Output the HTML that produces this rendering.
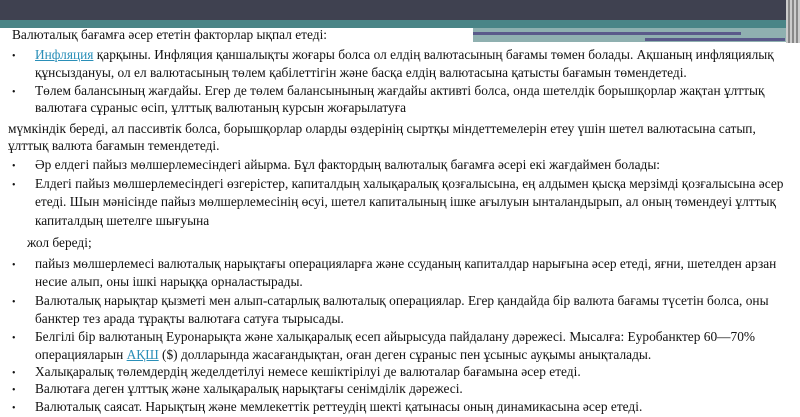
<!DOCTYPE html>
<html><head><meta charset="utf-8"><style>
body{margin:0;width:800px;height:413px;overflow:hidden;background:#fff;position:relative;font-family:"Liberation Serif","DejaVu Serif",serif;color:#111;}
.l{position:absolute;white-space:nowrap;font-size:14px;line-height:16px;transform:scaleX(0.955);transform-origin:0 0;margin-top:2px;}
.b{position:absolute;left:12px;font-size:10px;line-height:16px;margin-top:2px;}
a{color:#2a8fb8;text-decoration:underline;}
</style></head><body>
<div style="position:absolute;left:0;top:0;width:800px;height:20px;background:#3f4150"></div>
<div style="position:absolute;left:0;top:20px;width:800px;height:8px;background:#4a8587"></div>
<div style="position:absolute;left:473px;top:28px;width:315px;height:14px;background:#8fb0b0"></div>
<div style="position:absolute;left:473px;top:32px;width:268px;height:3px;background:#5a5a8a"></div>
<div style="position:absolute;left:645px;top:38px;width:140px;height:3px;background:#5a5a8a"></div>
<div style="position:absolute;left:786px;top:0;width:14px;height:43px;background:repeating-linear-gradient(90deg,#ccc 0 2px,#888 2px 4px)"></div>

<div class="l" style="left:12px;top:26px">Валюталық бағамға әсер ететін факторлар ықпал етеді:</div>
<div class="b" style="top:47px">•</div>
<div class="l" style="left:35px;top:46px"><a>Инфляция</a> қарқыны. Инфляция қаншалықты жоғары болса ол елдің валютасының бағамы төмен болады. Ақшаның инфляциялық</div>
<div class="l" style="left:35px;top:64px">құнсыздануы, ол ел валютасының төлем қабілеттігін және басқа елдің валютасына қатысты бағамын төмендетеді.</div>
<div class="b" style="top:83px">•</div>
<div class="l" style="left:35px;top:82px">Төлем балансының жағдайы. Егер де төлем балансынының жағдайы активті болса, онда шетелдік борышқорлар жақтан ұлттық</div>
<div class="l" style="left:35px;top:99px">валютаға сұраныс өсіп, ұлттық валютаның курсын жоғарылатуға</div>
<div class="l" style="left:8px;top:120px">мүмкіндік береді, ал пассивтік болса, борышқорлар оларды өздерінің сыртқы міндеттемелерін етеу үшін шетел валютасына сатып,</div>
<div class="l" style="left:8px;top:137px">ұлттық валюта бағамын темендетеді.</div>
<div class="b" style="top:157px">•</div>
<div class="l" style="left:35px;top:156px">Әр елдегі пайыз мөлшерлемесіндегі айырма. Бұл фактордың валюталық бағамға әсері екі жағдаймен болады:</div>
<div class="b" style="top:176px">•</div>
<div class="l" style="left:35px;top:175px">Елдегі пайыз мөлшерлемесіндегі өзгерістер, капиталдың халықаралық қозғалысына, ең алдымен қысқа мерзімді қозғалысына әсер</div>
<div class="l" style="left:35px;top:193px">етеді. Шын мәнісінде пайыз мөлшерлемесінің өсуі, шетел капиталының ішке ағылуын ынталандырып, ал оның төмендеуі ұлттық</div>
<div class="l" style="left:35px;top:212px">капиталдың шетелге шығуына</div>
<div class="l" style="left:27px;top:234px">жол береді;</div>
<div class="b" style="top:256px">•</div>
<div class="l" style="left:35px;top:255px">пайыз мөлшерлемесі валюталық нарықтағы операцияларға және ссуданың капиталдар нарығына әсер етеді, яғни, шетелден арзан</div>
<div class="l" style="left:35px;top:273px">несие алып, оны ішкі нарыққа орналастырады.</div>
<div class="b" style="top:293px">•</div>
<div class="l" style="left:35px;top:292px">Валюталық нарықтар қызметі мен алып-сатарлық валюталық операциялар. Егер қандайда бір валюта бағамы түсетін болса, оны</div>
<div class="l" style="left:35px;top:310px">банктер тез арада тұрақты валютаға сатуға тырысады.</div>
<div class="b" style="top:329px">•</div>
<div class="l" style="left:35px;top:328px">Белгілі бір валютаның Еуронарықта және халықаралық есеп айырысуда пайдалану дәрежесі. Мысалға: Еуробанктер 60—70%</div>
<div class="l" style="left:35px;top:346px">операцияларын <a>АҚШ</a> ($) долларында жасағандықтан, оған деген сұраныс пен ұсыныс ауқымы анықталады.</div>
<div class="b" style="top:364px">•</div>
<div class="l" style="left:35px;top:363px">Халықаралық төлемдердің жеделдетілуі немесе кешіктірілуі де валюталар бағамына әсер етеді.</div>
<div class="b" style="top:381px">•</div>
<div class="l" style="left:35px;top:380px">Валютаға деген ұлттық және халықаралық нарықтағы сенімділік дәрежесі.</div>
<div class="b" style="top:399px">•</div>
<div class="l" style="left:35px;top:398px">Валюталық саясат. Нарықтың және мемлекеттік реттеудің шекті қатынасы оның динамикасына әсер етеді.</div>
</body></html>
